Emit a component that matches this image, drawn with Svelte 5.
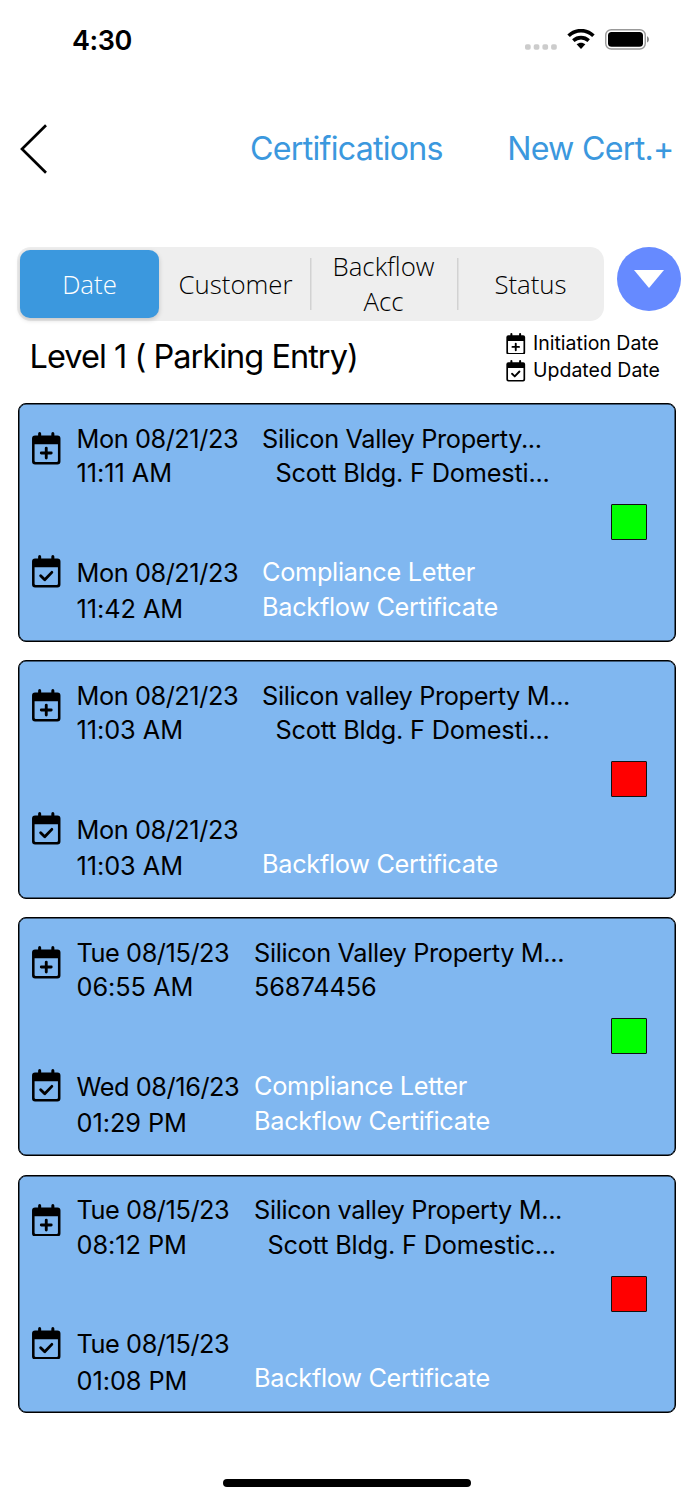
<script lang="ts">
	type Certification = {
		initiated: [string, string];
		updated: [string, string];
		customer: string;
		assembly: string;
		indent?: boolean;
		wide?: boolean;
		letter: boolean;
	};

	const tabs = ["Date", "Customer", "Backflow Acc", "Status"];
	let active = $state("Date");

	const certifications: Certification[] = [
		{
			initiated: ["Mon 08/21/23", "11:11 AM"],
			updated: ["Mon 08/21/23", "11:42 AM"],
			customer: "Silicon Valley Property...",
			assembly: "Scott Bldg. F Domesti...",
			indent: true,
			wide: true,
			letter: true,
		},
		{
			initiated: ["Mon 08/21/23", "11:03 AM"],
			updated: ["Mon 08/21/23", "11:03 AM"],
			customer: "Silicon valley Property M...",
			assembly: "Scott Bldg. F Domesti...",
			indent: true,
			wide: true,
			letter: false,
		},
		{
			initiated: ["Tue 08/15/23", "06:55 AM"],
			updated: ["Wed 08/16/23", "01:29 PM"],
			customer: "Silicon Valley Property M...",
			assembly: "56874456",
			letter: true,
		},
		{
			initiated: ["Tue 08/15/23", "08:12 PM"],
			updated: ["Tue 08/15/23", "01:08 PM"],
			customer: "Silicon valley Property M...",
			assembly: "Scott Bldg. F Domestic...",
			indent: true,
			letter: false,
		},
	];
</script>

{#snippet calendar(kind: string)}
	<svg class="calendar" viewBox="0 0 28 32" aria-hidden="true">
		<path d="M6 5V1.600a1.500 1.500 0 0 1 3 0V5zM19 5V1.600a1.500 1.500 0 0 1 3 0V5z" />
		<path
			fill-rule="evenodd"
			d="M3 3.500h22a3 3 0 0 1 3 3V29a3 3 0 0 1-3 3H3a3 3 0 0 1-3-3V6.500a3 3 0 0 1 3-3zM2.500 12v16.300a1.300 1.300 0 0 0 1.300 1.300h20.400a1.300 1.300 0 0 0 1.300-1.300V12z"
		/>
		{#if kind === "plus"}
			<path class="mark" d="M14 15.800v9.800M9.100 20.700h9.800" />
		{:else}
			<path class="mark" d="M8.500 20.500l4 3.900 7-7.300" />
		{/if}
	</svg>
{/snippet}

<div class="screen">
	<div class="status-bar">
		<span class="clock">4:30</span>
		<div class="indicators">
			<svg width="32" height="6" viewBox="0 0 32 6">
				{#each [0, 8.7, 17.4, 26.1] as x}
					<rect {x} y="0.200" width="5.700" height="5.500" rx="1.800" fill="#ccc" />
				{/each}
			</svg>
			<svg class="wifi" width="28" height="21" viewBox="0 0 28 21">
				<path d="M1.600 6.800C8.600-.1 19.400-.1 26.400 6.800" />
				<path d="M6.300 11.600c4.600-4 10.800-4 15.400 0" />
				<path class="dot" d="M9.600 15.200c2.500-2.100 6.300-2.100 8.800 0L14 20z" />
			</svg>
			<svg width="45" height="21" viewBox="0 0 45 21">
				<rect x="0.750" y="0.750" width="39.500" height="19.300" rx="5.500" fill="none" stroke="#999" stroke-width="1.400" />
				<rect x="3" y="3" width="35" height="14.800" rx="3.600" />
				<path d="M42 7.300c2.600 1 2.600 5.200 0 6.200z" fill="#888" />
			</svg>
		</div>
	</div>

	<header class="nav">
		<button class="back" aria-label="Back">
			<svg width="28" height="52" viewBox="0 0 28 52">
				<path d="M26 2.300L2 26l24 23.700" fill="none" stroke="#000" stroke-width="2.700" />
			</svg>
		</button>
		<h1>Certifications</h1>
		<button class="new">New Cert.+</button>
	</header>

	<div class="filters">
		<div class="tabs">
			{#each tabs as tab}
				<button class="tab" class:active={active === tab} onclick={() => (active = tab)}>
					<span>{tab}</span>
				</button>
			{/each}
		</div>
		<button class="toggle" aria-label="Sort">
			<svg width="30" height="18" viewBox="0 0 30 18"><path d="M0 0h30L15 18z" fill="#fff" /></svg>
		</button>
	</div>

	<div class="summary">
		<h2>Level 1 ( Parking Entry)</h2>
		<div class="legend">
			<div>{@render calendar("plus")}<span>Initiation Date</span></div>
			<div>{@render calendar("check")}<span>Updated Date</span></div>
		</div>
	</div>

	<main>
		{#each certifications as cert}
			<article class="card" class:wide={cert.wide}>
				<div class="icons">
					{@render calendar("plus")}
					{@render calendar("check")}
				</div>
				<div class="dates">
					<p>{cert.initiated[0]}</p>
					<p class="time">{cert.initiated[1]}</p>
					<p class="updated">{cert.updated[0]}</p>
					<p class="updated-time time">{cert.updated[1]}</p>
				</div>
				<div class="info">
					<p class="customer">{cert.customer}</p>
					<p class="assembly" class:indent={cert.indent}>{cert.assembly}</p>
					<div class="documents">
						<p>{cert.letter ? "Compliance Letter" : ""}</p>
						<p>Backflow Certificate</p>
					</div>
				</div>
				<div class="state" class:done={cert.letter}></div>
			</article>
		{/each}
	</main>

	<div class="home"></div>
</div>

<style>
	:global(body) {
		background: #fff;
	}

	.screen {
		display: flex;
		flex-direction: column;
		box-sizing: border-box;
		width: 693px;
		height: 1500px;
		overflow: hidden;
		font-family: Inter, "Liberation Sans", sans-serif;
		color: #000;
	}

	button {
		padding: 0;
		border: 0;
		background: none;
		font: inherit;
		color: inherit;
	}

	h1,
	h2,
	p {
		margin: 0;
		font-weight: 400;
		white-space: nowrap;
	}

	svg {
		display: block;
		flex: none;
	}

	.status-bar {
		display: flex;
		justify-content: space-between;
		align-items: center;
		height: 79px;
		padding: 0 43.5px 0 72px;
	}

	.clock {
		padding-top: 1px;
		font-size: 27px;
		font-weight: 600;
		letter-spacing: -0.4px;
	}

	.indicators {
		display: flex;
		align-items: flex-end;
		gap: 10px;
	}

	.wifi {
		fill: none;
		stroke: #000;
		stroke-width: 3.6;
	}

	.wifi .dot {
		fill: #000;
		stroke: none;
	}

	.nav {
		display: grid;
		grid-template-columns: 230.5px 1fr auto;
		align-items: center;
		height: 139px;
		padding: 0 19.500px;
		color: #3b98de;
		font-size: 32.2px;
	}

	h1 {
		font-size: inherit;
		letter-spacing: -0.75px;
	}

	.new {
		letter-spacing: -0.75px;
	}

	.filters {
		display: flex;
		gap: 13px;
		height: 74px;
		margin-top: 29px;
		padding-left: 17px;
	}

	.tabs {
		display: grid;
		grid-template-columns: 144px 149px 147px 147px;
		width: 587px;
		border-radius: 14px;
		background: #eee;
	}

	.tab {
		display: flex;
		align-items: center;
		justify-content: center;
		padding: 0 20px;
		font: 300 25.8px/35px "Open Sans", sans-serif;
	}

	.tab + .tab + .tab {
		background: linear-gradient(#d2d2d2, #d2d2d2) 0 11px / 1.5px 52px no-repeat;
	}

	.tab.active {
		margin: 3px 2px 3px 3px;
		border-radius: 10px;
		background: #3b98de;
		box-shadow: 0 2px 5px rgba(0, 0, 0, 0.18);
		color: #fff;
	}

	.toggle {
		display: flex;
		align-items: center;
		justify-content: center;
		width: 64px;
		height: 64px;
		border-radius: 50%;
		background: #668aff;
	}

	.summary {
		display: flex;
		justify-content: space-between;
		height: 82px;
		padding: 0 34px 0 29.5px;
	}

	h2 {
		margin-top: 15.5px;
		font-size: 32.5px;
		line-height: 40px;
		letter-spacing: -0.97px;
	}

	.legend {
		padding-top: 8.5px;
		font-size: 19.5px;
		line-height: 27.5px;
	}

	.legend div {
		display: flex;
		align-items: center;
		gap: 7.5px;
		width: 153px;
		white-space: nowrap;
	}

	.calendar {
		width: 28.5px;
		height: 32.5px;
	}

	.legend .calendar {
		width: 19.5px;
		height: 21.5px;
	}

	.mark {
		fill: none;
		stroke: #000;
		stroke-width: 2.8;
		stroke-linecap: round;
		stroke-linejoin: round;
	}

	main {
		display: flex;
		flex-direction: column;
		gap: 18.7px;
		padding: 0 17px 0 17.5px;
	}

	.card {
		display: grid;
		grid-template-columns: 44.5px 177.5px 1fr 36px;
		box-sizing: border-box;
		height: 238.5px;
		padding: 17.500px 28px 0 13.500px;
		border: 1px solid #000;
		border-radius: 8px;
		box-shadow: inset 0 0 0 0.5px #000;
		background: #80b7f0;
		font-size: 25.3px;
		line-height: 34.5px;
		letter-spacing: -0.3px;
	}

	.card.wide {
		grid-template-columns: 44.5px 185.5px 1fr 36px;
	}

	.icons {
		display: flex;
		flex-direction: column;
		gap: 90.5px;
		padding-top: 10.5px;
	}

	.card p {
		height: 34.5px;
	}

	.dates {
		letter-spacing: -0.42px;
	}

	.time {
		letter-spacing: -0.05px;
	}

	.customer {
		letter-spacing: -0.35px;
	}

	.assembly {
		letter-spacing: -0.1px;
	}

	.updated {
		margin-top: 65px;
	}

	.updated-time {
		margin-top: 2px;
	}

	.indent {
		padding-left: 13.5px;
		letter-spacing: -0.2px;
	}

	.documents {
		margin-top: 64.5px;
		color: #fff;
	}

	.state {
		box-sizing: border-box;
		width: 36px;
		height: 36px;
		margin-top: 82.5px;
		border: 1px solid #111;
		border-radius: 1px;
		background: #f00;
	}

	.state.done {
		background: #0f0;
	}

	.home {
		width: 248px;
		height: 8px;
		margin: auto auto 13px 222.5px;
		border-radius: 4px;
		background: #000;
	}
</style>
